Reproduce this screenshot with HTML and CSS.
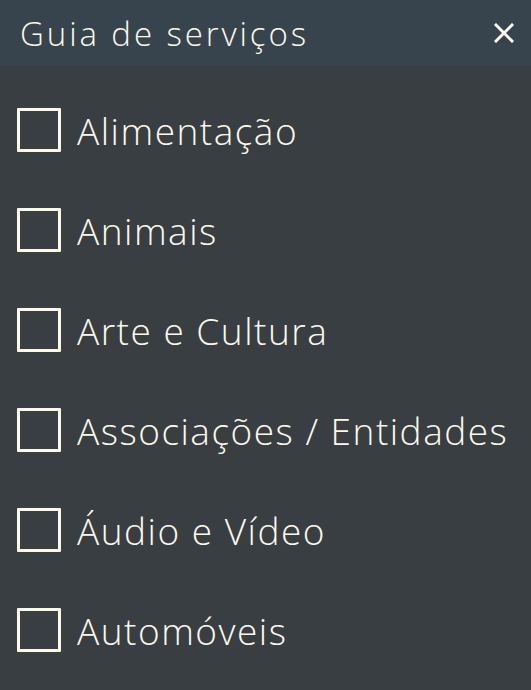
FILE: index.html
```html
<!DOCTYPE html>
<html lang="pt">
<head>
<meta charset="utf-8">
<link rel="stylesheet" href="styles.css">
</head>
<body>
<div class="panel">
  <header class="head">
    <h1 class="title">Guia de serviços</h1>
    <button class="close" aria-label="Fechar">
      <svg width="20" height="20" viewBox="0 0 20 20"><path d="M2 2 L18 18 M18 2 L2 18" stroke="#fdf9ea" stroke-width="3" stroke-linecap="square"/></svg>
    </button>
  </header>
  <ul class="list">
    <li class="item"><span class="box"></span><span class="label">Alimentação</span></li>
    <li class="item"><span class="box"></span><span class="label">Animais</span></li>
    <li class="item"><span class="box"></span><span class="label">Arte e Cultura</span></li>
    <li class="item"><span class="box"></span><span class="label">Associações / Entidades</span></li>
    <li class="item"><span class="box"></span><span class="label">Áudio e Vídeo</span></li>
    <li class="item"><span class="box"></span><span class="label">Automóveis</span></li>
  </ul>
</div>
</body>
</html>
```
FILE: styles.css
```css
html, body {
  margin: 0;
  padding: 0;
  background: #393e42;
}
.panel {
  width: 531px;
  height: 690px;
  background: #393e42;
  color: #fdf9ea;
  font-family: "Open Sans", "Liberation Sans", sans-serif;
  font-weight: 300;
  overflow: hidden;
}
.head {
  height: 66px;
  background: #37444e;
  display: flex;
  align-items: center;
  justify-content: space-between;
  padding: 0 17px 0 20px;
}
.title {
  margin: 0;
  font-size: 33px;
  font-weight: 300;
  letter-spacing: 2.9px;
  line-height: 1;
}
.close {
  background: none;
  border: 0;
  padding: 0;
  width: 20px;
  height: 20px;
  display: flex;
}
.list {
  list-style: none;
  margin: 0;
  padding: 14px 0 0 17px;
}
.item {
  height: 100px;
  display: flex;
  align-items: center;
  gap: 16px;
}
.box {
  width: 38px;
  height: 38px;
  border: 3px solid #fdf9ea;
  border-radius: 1px;
  flex: none;
}
.label {
  font-size: 37px;
  letter-spacing: 1.5px;
  line-height: 1;
}
```
